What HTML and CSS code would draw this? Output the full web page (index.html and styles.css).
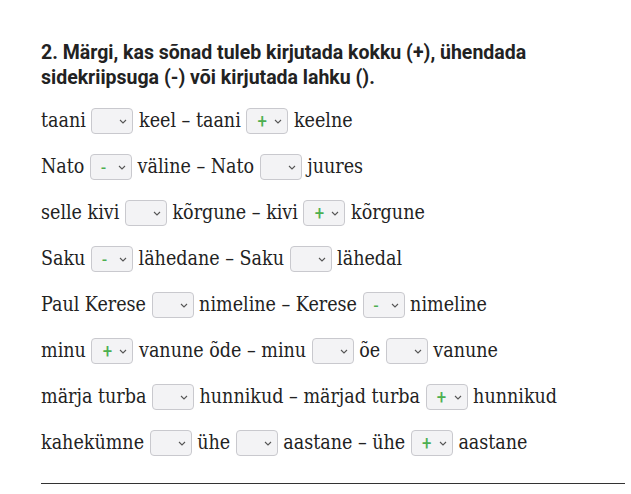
FILE: index.html
```html
<!DOCTYPE html>
<html lang="et">
<head>
<meta charset="utf-8">
<link rel="stylesheet" href="styles.css">
</head>
<body>
<div class="page">
  <h2 class="title">2. Märgi, kas sõnad tuleb kirjutada kokku (+), ühendada sidekriipsuga (-) või kirjutada lahku ().</h2>
  <div class="rows">
    <p class="row">taani <span class="sel"><span class="val"></span><svg class="chev" viewBox="0 0 8 5"><path d="M1 1l3 3 3-3"/></svg></span> keel – taani <span class="sel"><span class="val">+</span><svg class="chev" viewBox="0 0 8 5"><path d="M1 1l3 3 3-3"/></svg></span> keelne</p>
    <p class="row">Nato <span class="sel"><span class="val">-</span><svg class="chev" viewBox="0 0 8 5"><path d="M1 1l3 3 3-3"/></svg></span> väline – Nato <span class="sel"><span class="val"></span><svg class="chev" viewBox="0 0 8 5"><path d="M1 1l3 3 3-3"/></svg></span> juures</p>
    <p class="row">selle kivi <span class="sel"><span class="val"></span><svg class="chev" viewBox="0 0 8 5"><path d="M1 1l3 3 3-3"/></svg></span> kõrgune – kivi <span class="sel"><span class="val">+</span><svg class="chev" viewBox="0 0 8 5"><path d="M1 1l3 3 3-3"/></svg></span> kõrgune</p>
    <p class="row">Saku <span class="sel"><span class="val">-</span><svg class="chev" viewBox="0 0 8 5"><path d="M1 1l3 3 3-3"/></svg></span> lähedane – Saku <span class="sel"><span class="val"></span><svg class="chev" viewBox="0 0 8 5"><path d="M1 1l3 3 3-3"/></svg></span> lähedal</p>
    <p class="row">Paul Kerese <span class="sel"><span class="val"></span><svg class="chev" viewBox="0 0 8 5"><path d="M1 1l3 3 3-3"/></svg></span> nimeline – Kerese <span class="sel"><span class="val">-</span><svg class="chev" viewBox="0 0 8 5"><path d="M1 1l3 3 3-3"/></svg></span> nimeline</p>
    <p class="row">minu <span class="sel"><span class="val">+</span><svg class="chev" viewBox="0 0 8 5"><path d="M1 1l3 3 3-3"/></svg></span> vanune õde – minu <span class="sel"><span class="val"></span><svg class="chev" viewBox="0 0 8 5"><path d="M1 1l3 3 3-3"/></svg></span> õe <span class="sel"><span class="val"></span><svg class="chev" viewBox="0 0 8 5"><path d="M1 1l3 3 3-3"/></svg></span> vanune</p>
    <p class="row">märja turba <span class="sel"><span class="val"></span><svg class="chev" viewBox="0 0 8 5"><path d="M1 1l3 3 3-3"/></svg></span> hunnikud – märjad turba <span class="sel"><span class="val">+</span><svg class="chev" viewBox="0 0 8 5"><path d="M1 1l3 3 3-3"/></svg></span> hunnikud</p>
    <p class="row">kahekümne <span class="sel"><span class="val"></span><svg class="chev" viewBox="0 0 8 5"><path d="M1 1l3 3 3-3"/></svg></span> ühe <span class="sel"><span class="val"></span><svg class="chev" viewBox="0 0 8 5"><path d="M1 1l3 3 3-3"/></svg></span> aastane – ühe <span class="sel"><span class="val">+</span><svg class="chev" viewBox="0 0 8 5"><path d="M1 1l3 3 3-3"/></svg></span> aastane</p>
  </div>
  <hr class="rule">
</div>
</body>
</html>
```
FILE: styles.css
```css
html, body {
  margin: 0;
  padding: 0;
  background: #fff;
}
.page {
  padding: 40px 6px 0 41px;
  color: #222;
}
.title {
  font-family: Roboto, "Noto Sans", sans-serif;
  font-weight: 700;
  font-size: 19.5px;
  line-height: 25px;
  margin: 0 0 18px 0;
  max-width: 545px;
  color: #222;
}
.rows {
  display: flex;
  flex-direction: column;
  gap: 20px;
}
.row {
  margin: 0;
  font-family: "DejaVu Serif Condensed", "DejaVu Serif", serif;
  font-stretch: condensed;
  font-size: 19.5px;
  line-height: 26px;
  height: 26px;
  white-space: nowrap;
  color: #222;
}
.sel {
  display: inline-flex;
  align-items: center;
  box-sizing: border-box;
  width: 42px;
  height: 26px;
  padding: 0 5px 0 10px;
  vertical-align: top;
  background: #f3f3f5;
  border: 1px solid #c9c9ce;
  border-radius: 4px;
}
.val {
  font-family: Roboto, "Noto Sans", sans-serif;
  font-size: 20px;
  font-weight: 400;
  color: #4caf50;
  line-height: 1;
}
.chev {
  width: 8px;
  height: 5px;
  fill: none;
  stroke: #555;
  stroke-width: 1.1;
  margin-left: auto;
}
.rule {
  border: 0;
  border-top: 1px solid #333;
  margin: 27px 0 0 0;
}
```
